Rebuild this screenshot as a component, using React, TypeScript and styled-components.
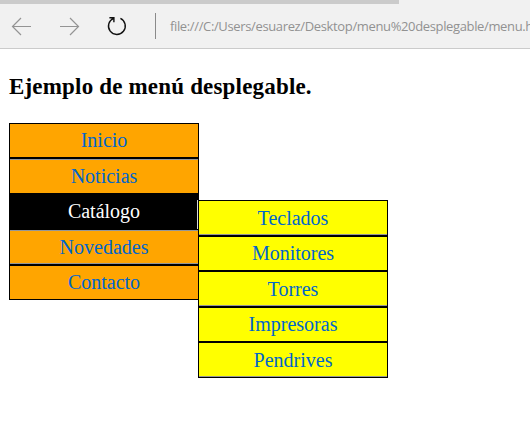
import React from 'react';
import styled, { createGlobalStyle } from 'styled-components';

const GlobalStyle = createGlobalStyle`
  * { box-sizing: border-box; }
  body { margin: 0; background: #fff; overflow: hidden; }
`;

const Page = styled.div`
  width: 530px;
  height: 429px;
  overflow: hidden;
  font-family: 'Liberation Serif', 'Times New Roman', serif;
`;

const TabStrip = styled.div`
  height: 4px;
  background: #f1f1f1;
`;

const TabEdge = styled.div`
  width: 399px;
  height: 4px;
  background: #cbcbcb;
`;

const Toolbar = styled.header`
  display: flex;
  align-items: center;
  height: 45px;
  padding-left: 11px;
  background: #f1f1f1;
  border-bottom: 1px solid #cbcbcb;
`;

const NavIcon = styled.svg<{ $gap: number; $color: string }>`
  flex: none;
  width: 22px;
  height: 22px;
  margin-right: ${(p) => p.$gap}px;
  fill: none;
  stroke: ${(p) => p.$color};
`;

const Divider = styled.span`
  flex: none;
  width: 1px;
  height: 26px;
  margin-right: 14px;
  background: #8a8a8a;
`;

const Address = styled.span`
  font: 13px/20px 'Open Sans', 'Noto Sans', sans-serif;
  letter-spacing: -0.36px;
  white-space: nowrap;
  color: #929292;
`;

const Title = styled.h1`
  margin: 24px 0 0 9px;
  height: 50px;
  font-size: 23px;
  line-height: 28px;
  letter-spacing: 0.18px;
  white-space: nowrap;
  color: #000;
`;

const Menus = styled.nav`
  display: flex;
  align-items: flex-start;
  padding-left: 9px;
`;

const Menu = styled.ul<{ $sub?: boolean }>`
  flex: none;
  width: 190px;
  margin: ${(p) => (p.$sub ? '77px 0 0 -1px' : '0')};
  padding: 0;
  list-style: none;
  border: 1px solid #000;
  ${(p) => p.$sub && 'z-index: 1;'}
`;

const Item = styled.li<{ $fill: string; $height: number; $gap: number; $over?: boolean; $under?: boolean; $active?: boolean }>`
  height: ${(p) => p.$height}px;
  margin-bottom: ${(p) => p.$gap}px;
  background: ${(p) => p.$fill};
  box-shadow: 0 ${(p) => p.$gap}px 0 #000;
  border-top: ${(p) => (p.$over ? '1px solid #969696' : '0')};
  border-bottom: ${(p) => (p.$under ? '1px solid #969696' : '0')};
  background-image: ${(p) => (p.$active ? 'linear-gradient(#d8d8d8, #d8d8d8)' : 'none')};
  background-repeat: no-repeat;
  background-size: 1px 29px;
  background-position: right 0 top 6px;
`;

const Label = styled.a<{ $active?: boolean; $shift: number }>`
  display: block;
  height: 32px;
  padding-top: ${(p) => p.$shift}px;
  font-size: 20px;
  line-height: 24px;
  text-align: center;
  color: ${(p) => (p.$active ? '#fff' : '#0066cc')};
`;

interface Entry {
  text: string;
  height: number;
  gap: number;
  shift: number;
  over?: boolean;
  under?: boolean;
  active?: boolean;
}

const sections: Entry[] = [
  { text: 'Inicio', height: 33, gap: 2, shift: 4 },
  { text: 'Noticias', height: 34, gap: 1, shift: 4, over: true },
  { text: 'Catálogo', height: 35, gap: 1, shift: 5, active: true },
  { text: 'Novedades', height: 34, gap: 2, shift: 4, over: true, under: true },
  { text: 'Contacto', height: 33, gap: 0, shift: 4 },
];

const products: Entry[] = [
  { text: 'Teclados', height: 34, gap: 2, shift: 5, under: true },
  { text: 'Monitores', height: 33, gap: 2, shift: 4 },
  { text: 'Torres', height: 34, gap: 2, shift: 5, under: true },
  { text: 'Impresoras', height: 33, gap: 2, shift: 4 },
  { text: 'Pendrives', height: 34, gap: 0, shift: 5, under: true },
];

function MenuList({ entries, fill, sub }: { entries: Entry[]; fill: string; sub?: boolean }) {
  return (
    <Menu $sub={sub}>
      {entries.map((e) => (
        <Item key={e.text} $fill={e.active ? '#000' : fill} $height={e.height} $gap={e.gap} $over={e.over} $under={e.under} $active={e.active}>
          <Label $active={e.active} $shift={e.shift}>{e.text}</Label>
        </Item>
      ))}
    </Menu>
  );
}

export default function App() {
  return (
    <Page>
      <GlobalStyle />
      <TabStrip><TabEdge /></TabStrip>
      <Toolbar>
        <NavIcon viewBox="0 0 22 22" $gap={26} $color="#949494">
          <path strokeWidth="1.2" d="M1.5 11.5H20M10 3L1.5 11.5L10 20" />
        </NavIcon>
        <NavIcon viewBox="0 0 22 22" $gap={25} $color="#949494">
          <path strokeWidth="1.2" d="M1 11.5H19.5M11 3L19.5 11.5L11 20" />
        </NavIcon>
        <NavIcon viewBox="0 0 22 22" $gap={27} $color="#111">
          <path strokeWidth="1.4" d="M14.4 3.4A8.4 8.4 0 1 1 7.6 3.3M3.4 2.7H7.9V7.2" />
        </NavIcon>
        <Divider />
        <Address>file:///C:/Users/esuarez/Desktop/menu%20desplegable/menu.h</Address>
      </Toolbar>
      <Title>Ejemplo de menú desplegable.</Title>
      <Menus>
        <MenuList entries={sections} fill="#ffa500" />
        <MenuList entries={products} fill="#ffff00" sub />
      </Menus>
    </Page>
  );
}
